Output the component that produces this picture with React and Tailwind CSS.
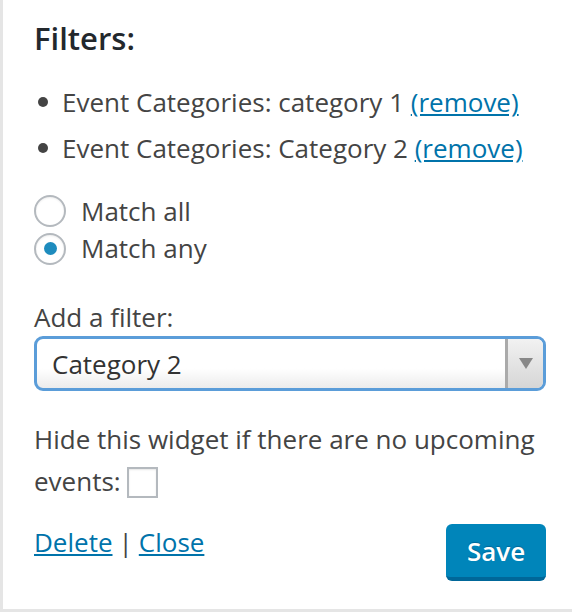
export default function App() {
  const font = { fontFamily: '"Open Sans", "Noto Sans", sans-serif' };
  return (
    <div className="w-[572px] h-[616px] bg-white">
      <div
        className="w-[572px] h-[612px] bg-white border-l-[3px] border-b-[3px] border-[#e5e5e5] pl-[31px] pr-[26px] pt-[18px] text-[26px] leading-[1.4] text-[#444]"
        style={font}
      >
        <h3 className="text-[31px] font-semibold text-[#23282d] leading-[1.3]">Filters:</h3>

        <ul className="mt-[26px] ml-[4px] flex flex-col gap-[9px]">
          <li className="flex items-center">
            <span className="w-[10px] h-[10px] rounded-full bg-[#444] mr-[14px]" />
            <span>
              Event Categories: category 1{" "}
              <a href="#" className="text-[#0073aa] underline">(remove)</a>
            </span>
          </li>
          <li className="flex items-center">
            <span className="w-[10px] h-[10px] rounded-full bg-[#444] mr-[14px]" />
            <span>
              Event Categories: Category 2{" "}
              <a href="#" className="text-[#0073aa] underline">(remove)</a>
            </span>
          </li>
        </ul>

        <div className="mt-[27px] flex flex-col gap-[1px]">
          <label className="flex items-center gap-[15px]">
            <span className="w-[32px] h-[32px] rounded-full border-2 border-[#b4b9be] bg-white shadow-[inset_0_1px_2px_rgba(0,0,0,0.07)]" />
            <span>Match all</span>
          </label>
          <label className="flex items-center gap-[15px]">
            <span className="w-[32px] h-[32px] rounded-full border-2 border-[#b4b9be] bg-white flex items-center justify-center shadow-[inset_0_1px_2px_rgba(0,0,0,0.07)]">
              <span className="w-[13px] h-[13px] rounded-full bg-[#1e8cbe]" />
            </span>
            <span>Match any</span>
          </label>
        </div>

        <p className="mt-[32px]">Add a filter:</p>
        <div className="mt-[1px] w-[512px] h-[55px] rounded-[9px] border-[3px] border-[#5b9dd9] flex overflow-hidden bg-gradient-to-b from-white from-60% to-[#ececec]">
          <div className="flex-1 flex items-center pl-[15px] text-[#333]">Category 2</div>
          <div className="w-[38px] border-l-[3px] border-[#aaa] flex items-center justify-center bg-gradient-to-b from-[#f2f2f2] to-[#d6d6d6]">
            <svg width="14" height="11" viewBox="0 0 14 11">
              <path d="M0 0 H14 L7 11 Z" fill="#888" />
            </svg>
          </div>
        </div>

        <p className="mt-[27px] leading-[42px]">
          Hide this widget if there are no upcoming
          <br />
          events:{" "}
          <span className="inline-block align-middle w-[31px] h-[31px] border-2 border-[#b4b9be] bg-white -mt-[4px] shadow-[inset_0_1px_2px_rgba(0,0,0,0.1)]" />
        </p>

        <div className="mt-[16px] flex items-start justify-between">
          <div className="pt-[6px]">
            <a href="#" className="text-[#0073aa] underline">Delete</a>
            <span className="mx-[6px]">|</span>
            <a href="#" className="text-[#0073aa] underline">Close</a>
          </div>
          <button className="mt-[6px] w-[100px] h-[57px] rounded-[6px] bg-[#0085ba] border-b-[4px] border-[#006799] text-white font-semibold text-[26px] [text-shadow:0_-1px_1px_#006799]">
            Save
          </button>
        </div>
      </div>
    </div>
  );
}
